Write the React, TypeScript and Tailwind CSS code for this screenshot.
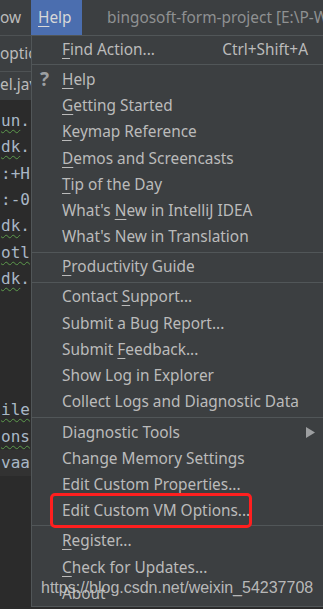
import React from "react";

type Item = { label: React.ReactNode; shortcut?: string; icon?: boolean; arrow?: boolean } | "sep";

const U = ({ c }: { c: string }) => <span className="underline decoration-1 underline-offset-[3px]">{c}</span>;

const items: Item[] = [
  { label: <><U c="F" />ind Action...</>, shortcut: "Ctrl+Shift+A" },
  "sep",
  { label: <><U c="H" />elp</>, icon: true },
  { label: <><U c="G" />etting Started</> },
  { label: <><U c="K" />eymap Reference</> },
  { label: <><U c="D" />emos and Screencasts</> },
  { label: <><U c="T" />ip of the Day</> },
  { label: <>What's <U c="N" />ew in IntelliJ IDEA</> },
  { label: <>What's New in Translation</> },
  "sep",
  { label: <><U c="P" />roductivity Guide</> },
  "sep",
  { label: <>Contact <U c="S" />upport...</> },
  { label: <>Submit a Bug Report...</> },
  { label: <>Submit <U c="F" />eedback...</> },
  { label: <>Show Log in Explorer</> },
  { label: <>Collect Logs and Diagnostic Data</> },
  "sep",
  { label: <>Diagnostic Tools</>, arrow: true },
  { label: <>Change Memory Settings</> },
  { label: <>Edit Custom Properties...</> },
  { label: <>Edit Custom VM Options...</> },
  "sep",
  { label: <><U c="R" />egister...</> },
  { label: <><U c="C" />heck for Updates...</> },
  { label: <>About</> },
];

const codeLines: { t: string; u?: string; hl?: boolean }[] = [
  { t: ".", u: "un" },
  { t: ".", u: "dk" },
  { t: ":+H" },
  { t: ":-0" },
  { t: ".", u: "dk" },
  { t: "", u: "otl" },
  { t: ".", u: "dk" },
  { t: "" },
  { t: "" },
  { t: "" },
  { t: "" },
  { t: "", u: "ile" },
  { t: "", u: "ons" },
  { t: "vaa", hl: true },
];

export default function App() {
  return (
    <div
      className="relative w-[323px] h-[609px] overflow-hidden bg-[#2b2b2b] text-[#bbbbbb]"
      style={{ fontFamily: '"Noto Sans", "Noto Sans CJK SC", sans-serif' }}
    >
      {/* top menu bar */}
      <div className="flex h-[36px] bg-[#3c3f41] border-b border-[#4e5254] text-[15.4px] leading-none">
        <div className="w-[31px] shrink-0 flex items-center overflow-hidden">ow</div>
        <div className="w-[51px] shrink-0 bg-[#4b6eaf] flex items-center pl-[7px] text-[#d8d8d8]">
          <U c="H" />elp
        </div>
        <div className="flex items-center pl-[25px] whitespace-nowrap text-[#8f9192]">
          bingosoft-form-project [E:\P-Work\bingosoft-form-project]
        </div>
      </div>

      {/* left strip */}
      <div className="w-[31px] overflow-hidden">
        <div className="h-[36px] bg-[#3c3f41] border-b border-[#4e5254] flex items-center text-[15.4px] whitespace-nowrap">
          options
        </div>
        <div className="h-[28px] bg-[#3c3f41] flex items-center text-[15.4px] whitespace-nowrap pb-[2px]">
          el.java
        </div>
        <div
          className="pt-[7.9px] text-[16px] text-[#a9b7c6]"
          style={{ fontFamily: '"DejaVu Sans Mono", monospace' }}
        >
          {codeLines.map((l, i) => (
            <div
              key={i}
              className={`h-[26.3px] flex items-center whitespace-nowrap pl-[1px] ${l.hl ? "bg-[#323232]" : ""}`}
            >
              {l.u && (
                <span className="underline decoration-wavy decoration-[#5c9a4c] decoration-1 underline-offset-[3px]">
                  {l.u}
                </span>
              )}
              {l.t}
            </div>
          ))}
        </div>
      </div>

      {/* dropdown menu */}
      <div className="absolute left-[31px] top-[35px] right-0 h-[572px] bg-[#3c3f41] border-l border-t border-b border-[#515658] pt-[0.4px] text-[15.4px] leading-none">
        {items.map((it, i) =>
          it === "sep" ? (
            <div key={i} className="h-[3.8px] flex items-center">
              <div className="h-px w-full bg-[#515658]" />
            </div>
          ) : (
            <div key={i} className="relative h-[26.25px] flex items-center pl-[30px] pr-[15px] whitespace-nowrap">
              {it.icon && (
                <span className="absolute left-[8px] text-[19px] font-bold text-[#9d9fa1]">?</span>
              )}
              <span className="flex-1">{it.label}</span>
              {it.shortcut && <span>{it.shortcut}</span>}
              {it.arrow && (
                <svg width="9" height="11" viewBox="0 0 9 11" className="mr-[-7px]">
                  <polygon points="0,0 9,5.5 0,11" fill="#9d9fa1" />
                </svg>
              )}
            </div>
          )
        )}
      </div>

      {/* red highlight box */}
      <div className="absolute left-[50px] top-[493px] w-[202px] h-[35px] border-[3px] border-[#ff1f1f] rounded-[5px]" />

      {/* watermark */}
      <div
        className="absolute left-[41px] top-[578px] text-[16px] leading-[20px] whitespace-nowrap text-[#c8c8c8]/90"
        style={{ fontFamily: '"Liberation Sans", Arial, sans-serif' }}
      >
        https://blog.csdn.net/weixin_54237708
      </div>
    </div>
  );
}
